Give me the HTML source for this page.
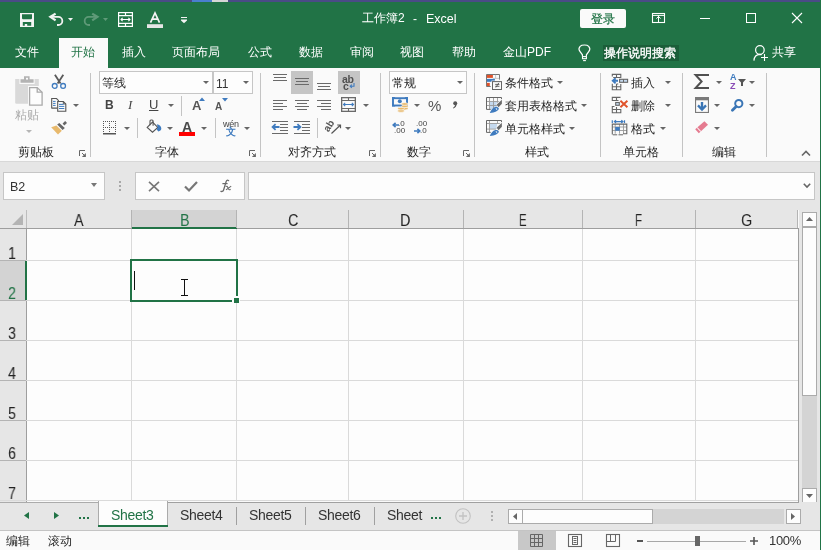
<!DOCTYPE html>
<html><head><meta charset="utf-8">
<style>
*{margin:0;padding:0;box-sizing:border-box}
html,body{width:821px;height:550px;overflow:hidden;background:#fafafa;font-family:"Liberation Sans",sans-serif;font-size:12px;color:#262626}
.a{position:absolute}
.t{position:absolute;white-space:nowrap;line-height:1;will-change:transform}
svg{position:absolute;overflow:visible}
.dd{position:absolute;width:0;height:0;border-left:3px solid transparent;border-right:3px solid transparent;border-top:3.5px solid #666}
.sep{position:absolute;width:1px;background:#c4c4c4}
.hl{position:absolute;background:#c5c5c5}
</style></head><body>

<!-- top strip -->
<div class="a" style="left:0;top:0;width:821px;height:2px;background:#4a4b86"></div>
<div class="a" style="left:192px;top:0;width:20px;height:2px;background:#4a7fcf"></div>
<div class="a" style="left:212px;top:0;width:16px;height:2px;background:#d6d6d6"></div>

<!-- title bar + tabs -->
<div class="a" style="left:0;top:2px;width:821px;height:66px;background:#217346"></div>

<!-- QAT icons -->
<svg style="left:20px;top:13px" width="14" height="14" viewBox="0 0 14 14">
  <rect x="0" y="0" width="14" height="14" fill="#f4f4f4"/>
  <path d="M2 1.3H12V5.4L11.2 6.3H2.8L2 5.4Z" fill="#217346"/>
  <path d="M2.8 9H11.2V12.7H7.2V11H4.8V12.7H2.8Z" fill="#217346"/>
</svg>
<svg style="left:46px;top:10px" width="20" height="20" viewBox="0 0 20 20">
  <path d="M9.6 3.6L4.4 6.9L9.6 10.4" fill="none" stroke="#f2f2f2" stroke-width="2.3" stroke-linejoin="miter"/>
  <path d="M5.3 6.9H12.3A4.05 4.05 0 0 1 12.3 15H11" fill="none" stroke="#f2f2f2" stroke-width="1.8"/>
</svg>
<svg style="left:68px;top:18px" width="5" height="3" viewBox="0 0 5 3"><path d="M0 0H5L2.5 3Z" fill="#f2f2f2"/></svg>
<svg style="left:81px;top:10px" width="20" height="20" viewBox="0 0 20 20">
  <path d="M11.2 3.6L16.4 6.9L11.2 10.4" fill="none" stroke="#5f9a78" stroke-width="2.3"/>
  <path d="M15.5 6.9H7.7A4.05 4.05 0 0 0 7.7 15H9" fill="none" stroke="#5f9a78" stroke-width="1.8"/>
</svg>
<svg style="left:103px;top:18px" width="5" height="3" viewBox="0 0 5 3"><path d="M0 0H5L2.5 3Z" fill="#5f9a78"/></svg>
<svg style="left:118px;top:12px" width="15" height="15" viewBox="0 0 15 15">
  <rect x="0.6" y="0.6" width="13.8" height="13.8" fill="none" stroke="#fff" stroke-width="1.2"/>
  <path d="M0.6 3.6H14.4M0.6 11.4H14.4M7.5 0.6V3.6M7.5 11.4V14.4" stroke="#fff" stroke-width="1.2"/>
  <path d="M3 7.5H12M4.6 5.9L3 7.5L4.6 9.1M10.4 5.9L12 7.5L10.4 9.1" fill="none" stroke="#fff" stroke-width="1.1"/>
</svg>
<svg style="left:147px;top:12px" width="16" height="16" viewBox="0 0 16 16">
  <path d="M3.5 10.6L8 0.9L12.5 10.6M5.2 7.2H10.8" fill="none" stroke="#f4f4f4" stroke-width="1.7"/>
  <rect x="0" y="12.2" width="16" height="3.8" fill="#e6e6e6"/>
</svg>
<svg style="left:181px;top:17px" width="6" height="7" viewBox="0 0 6 7">
  <path d="M0 0.5H6" stroke="#f4f4f4" stroke-width="1"/>
  <path d="M0 2.6H6V3.4L3 6.2L0 3.4Z" fill="#f4f4f4"/>
</svg>

<!-- title -->
<div class="t" style="left:362px;top:12px;color:#fff;font-size:12px">工作簿2</div>
<div class="t" style="left:413px;top:13px;color:#fff;font-size:12px">-</div>
<div class="t" style="left:426px;top:13px;color:#fff;font-size:12.5px">Excel</div>

<!-- login -->
<div class="a" style="left:580px;top:9px;width:46px;height:19px;background:#fafafa;border-radius:2px"></div>
<div class="t" style="left:591px;top:13px;color:#217346;font-size:12px;-webkit-text-stroke:0.2px #217346">登录</div>

<!-- ribbon display options -->
<svg style="left:652px;top:13px" width="13" height="10" viewBox="0 0 13 10">
  <rect x="0.5" y="0.5" width="12" height="9" fill="none" stroke="#fff" stroke-width="1.1"/>
  <path d="M0.5 2.4H12.5M6.5 2.4V9.5" stroke="#fff" stroke-width="1"/>
  <path d="M4.4 5.6L6.5 3.4L8.6 5.6" fill="none" stroke="#fff" stroke-width="1"/>
</svg>
<!-- window controls -->
<div class="a" style="left:700px;top:18px;width:10px;height:1px;background:#fff"></div>
<div class="a" style="left:746px;top:13px;width:10px;height:10px;border:1px solid #fff"></div>
<svg style="left:791px;top:12px" width="12" height="12" viewBox="0 0 12 12">
  <path d="M1 1L11 11M11 1L1 11" stroke="#fff" stroke-width="1.1"/>
</svg>

<!-- tabs -->
<div class="t" style="left:15px;top:46px;color:#fff">文件</div>
<div class="t" style="left:122px;top:46px;color:#fff">插入</div>
<div class="t" style="left:172px;top:46px;color:#fff">页面布局</div>
<div class="t" style="left:248px;top:46px;color:#fff">公式</div>
<div class="t" style="left:299px;top:46px;color:#fff">数据</div>
<div class="t" style="left:350px;top:46px;color:#fff">审阅</div>
<div class="t" style="left:400px;top:46px;color:#fff">视图</div>
<div class="t" style="left:452px;top:46px;color:#fff">帮助</div>
<div class="t" style="left:503px;top:46px;color:#fff">金山PDF</div>
<svg style="left:572px;top:42px" width="24" height="22" viewBox="0 0 24 22">
  <path d="M10.4 14.2V12.8L7.9 9.4C6.9 8 6.9 5.6 8.1 4.3C9 3.4 10.5 3 12.4 3C14.3 3 15.8 3.4 16.7 4.3C17.9 5.6 17.9 8 16.9 9.4L14.4 12.8V14.2" fill="none" stroke="#fff" stroke-width="1.2"/>
  <rect x="10.5" y="14.6" width="3.9" height="2.1" fill="none" stroke="#fff" stroke-width="1.1"/>
  <path d="M11.1 18.6H13.9" stroke="#fff" stroke-width="1.1"/>
</svg>
<div class="a" style="left:603px;top:45px;width:76px;height:16px;background:#1b5e39"></div>
<div class="t" style="left:604px;top:47px;color:#fff;-webkit-text-stroke:0.35px #fff">操作说明搜索</div>
<svg style="left:753px;top:44px" width="16" height="18" viewBox="0 0 16 18">
  <circle cx="6.9" cy="6" r="4.3" fill="none" stroke="#fff" stroke-width="1.2"/>
  <path d="M0.9 16.6C1.2 13 3.6 10.5 6.9 10.4C7.6 10.4 8.2 10.5 8.8 10.7" fill="none" stroke="#fff" stroke-width="1.2"/>
  <path d="M11.5 10V17M8 13.5H15" stroke="#fff" stroke-width="1.1"/>
</svg>
<div class="t" style="left:772px;top:46px;color:#fff">共享</div>

<!-- active tab -->
<div class="a" style="left:59px;top:38px;width:49px;height:30px;background:#fafafa"></div>
<div class="t" style="left:71px;top:46px;color:#217346">开始</div>

<!-- ribbon -->
<div class="a" style="left:0;top:68px;width:820px;height:93px;background:#fafafa"></div>
<div class="a" style="left:0;top:161px;width:820px;height:1px;background:#d8d8d8"></div>

<!-- separators -->
<div class="sep" style="left:90px;top:73px;height:84px"></div>
<div class="sep" style="left:260px;top:73px;height:84px"></div>
<div class="sep" style="left:380px;top:73px;height:84px"></div>
<div class="sep" style="left:474px;top:73px;height:84px"></div>
<div class="sep" style="left:600px;top:73px;height:84px"></div>
<div class="sep" style="left:682px;top:73px;height:84px"></div>
<div class="sep" style="left:766px;top:73px;height:84px"></div>

<!-- group labels -->
<div class="t" style="left:18px;top:146px">剪贴板</div>
<div class="t" style="left:155px;top:146px">字体</div>
<div class="t" style="left:288px;top:146px">对齐方式</div>
<div class="t" style="left:407px;top:146px">数字</div>
<div class="t" style="left:525px;top:146px">样式</div>
<div class="t" style="left:623px;top:146px">单元格</div>
<div class="t" style="left:712px;top:146px">编辑</div>

<!-- launchers -->
<svg style="left:79px;top:150px" width="7" height="7" viewBox="0 0 7 7"><path d="M0.5 6V0.5H6" fill="none" stroke="#666" stroke-width="1"/><path d="M2.9 6.9H6.9V2.9Z" fill="#666"/><path d="M3 3L5 5" stroke="#666" stroke-width="1"/></svg>
<svg style="left:249px;top:150px" width="7" height="7" viewBox="0 0 7 7"><path d="M0.5 6V0.5H6" fill="none" stroke="#666" stroke-width="1"/><path d="M2.9 6.9H6.9V2.9Z" fill="#666"/><path d="M3 3L5 5" stroke="#666" stroke-width="1"/></svg>
<svg style="left:369px;top:150px" width="7" height="7" viewBox="0 0 7 7"><path d="M0.5 6V0.5H6" fill="none" stroke="#666" stroke-width="1"/><path d="M2.9 6.9H6.9V2.9Z" fill="#666"/><path d="M3 3L5 5" stroke="#666" stroke-width="1"/></svg>
<svg style="left:463px;top:150px" width="7" height="7" viewBox="0 0 7 7"><path d="M0.5 6V0.5H6" fill="none" stroke="#666" stroke-width="1"/><path d="M2.9 6.9H6.9V2.9Z" fill="#666"/><path d="M3 3L5 5" stroke="#666" stroke-width="1"/></svg>
<svg style="left:801px;top:150px" width="10" height="6" viewBox="0 0 10 6"><path d="M1 5.5L5 1.5L9 5.5" fill="none" stroke="#666" stroke-width="1.6"/></svg>

<!-- clipboard -->
<svg style="left:10px;top:72px" width="36" height="36" viewBox="0 0 36 36">
  <path d="M5.2 6.9H28.8V30.5Q28.8 31.7 27.6 31.7H6.4Q5.2 31.7 5.2 30.5Z" fill="#d9d9d9"/>
  <rect x="9.4" y="5.8" width="15.2" height="6.2" fill="#fafafa"/>
  <path d="M10.5 7.2H14V4.3H19.6V7.2H23.6V10.7H10.5Z" fill="#b3b3b3"/>
  <rect x="16" y="5.8" width="2" height="1.8" fill="#fafafa"/>
  <rect x="18" y="14" width="16" height="21" fill="#fafafa"/>
  <path d="M19.6 15.6H27.2L32.1 20.2V33.1H19.6Z" fill="#fdfdfd" stroke="#a9a9a9" stroke-width="1.3"/>
  <path d="M27.2 15.6V20.2H32.1" fill="none" stroke="#a9a9a9" stroke-width="1.3"/>
</svg>
<div class="t" style="left:15px;top:109px;color:#ababab">粘贴</div>
<div class="dd" style="left:26px;top:130px;border-top-color:#b5b5b5"></div>
<svg style="left:48px;top:72px" width="20" height="20" viewBox="0 0 20 20">
  <path d="M6.9 2.7L12.6 11.6M15.3 2.7L9.6 11.6" stroke="#5a5a5a" stroke-width="1.8"/>
  <circle cx="6.7" cy="13.9" r="2.4" fill="#fafafa" stroke="#3f7bbf" stroke-width="1.3"/>
  <circle cx="15.1" cy="13.9" r="2.4" fill="#fafafa" stroke="#3f7bbf" stroke-width="1.3"/>
</svg>
<svg style="left:48px;top:96px" width="20" height="18" viewBox="0 0 20 18">
  <path d="M3.7 12.6V2.5H8.5L10.4 4.4V5.5M3.7 12.1H9.2" fill="none" stroke="#555" stroke-width="1.1"/>
  <path d="M5 5.4H7.6M5 7.4H7.6M5 9.4H7.6" stroke="#3f7bbf" stroke-width="1"/>
  <path d="M9.7 5.5H15.3L17.8 8V15.2H9.7Z" fill="#fafafa" stroke="#555" stroke-width="1.1"/>
  <path d="M15.3 5.5V8H17.8" fill="none" stroke="#555" stroke-width="0.9"/>
  <path d="M11 8.4H15.6M11 10.4H16.3M11 12.5H16.3" stroke="#3f7bbf" stroke-width="1"/>
</svg>
<div class="dd" style="left:73px;top:104px"></div>
<svg style="left:48px;top:116px" width="24" height="22" viewBox="0 0 24 22">
  <path d="M14.6 7.6L17.2 5L19 7L16.3 9.6Z" fill="#666"/>
  <path d="M9.2 8.5L11.3 7L16.8 12L14.6 13.9Z" fill="#666"/>
  <path d="M3.2 11.2L8.4 9.4L13.8 14.8L10 18.6Z" fill="#e8b96c"/>
</svg>

<!-- font -->
<div class="a" style="left:99px;top:71px;width:114px;height:23px;border:1px solid #c6c6c6;background:#fdfdfd"></div>
<div class="a" style="left:213px;top:71px;width:40px;height:23px;border:1px solid #c6c6c6;background:#fdfdfd"></div>
<div class="t" style="left:102px;top:77px">等线</div>
<div class="dd" style="left:203px;top:81px"></div>
<div class="t" style="left:216px;top:78px;font-size:12px;color:#333">11</div>
<div class="dd" style="left:243px;top:81px"></div>
<div class="t" style="left:105px;top:99px;font-weight:bold;font-size:12px;color:#444">B</div>
<div class="t" style="left:128px;top:98px;font-style:italic;font-size:13px;color:#444;font-family:'Liberation Serif',serif">I</div>
<div class="t" style="left:149px;top:98px;font-size:13px;color:#444;text-decoration:underline">U</div>
<div class="dd" style="left:168px;top:104px"></div>
<div class="sep" style="left:181px;top:96px;height:20px"></div>
<div class="t" style="left:192px;top:99px;font-size:13px;color:#555;font-weight:bold">A</div>
<svg style="left:199px;top:97px" width="6" height="4" viewBox="0 0 6 4"><path d="M0 4L3 0.5L6 4Z" fill="#3f7bbf"/></svg>
<div class="t" style="left:215px;top:102px;font-size:10px;color:#555;font-weight:bold">A</div>
<svg style="left:222px;top:98px" width="6" height="4" viewBox="0 0 6 4"><path d="M0 0L3 3.5L6 0Z" fill="#3f7bbf"/></svg>
<svg style="left:103px;top:121px" width="14" height="14" viewBox="0 0 14 14">
  <path d="M0 0h1v1h-1zM0 2h1v1h-1zM0 4h1v1h-1zM0 6h1v1h-1zM0 8h1v1h-1zM0 10h1v1h-1zM6 0h1v1h-1zM6 2h1v1h-1zM6 4h1v1h-1zM6 6h1v1h-1zM6 8h1v1h-1zM6 10h1v1h-1zM12 0h1v1h-1zM12 2h1v1h-1zM12 4h1v1h-1zM12 6h1v1h-1zM12 8h1v1h-1zM12 10h1v1h-1zM2 0h1v1h-1zM4 0h1v1h-1zM8 0h1v1h-1zM10 0h1v1h-1zM2 6h1v1h-1zM4 6h1v1h-1zM8 6h1v1h-1zM10 6h1v1h-1z" fill="#555"/>
  <rect x="0" y="12" width="13" height="1.5" fill="#555"/>
</svg>
<div class="dd" style="left:124px;top:127px"></div>
<div class="sep" style="left:137px;top:118px;height:20px"></div>
<svg style="left:146px;top:119px" width="16" height="15" viewBox="0 0 16 15">
  <path d="M1.2 8.4L6.5 3.1L11.8 8.4L6.5 13.2Z" fill="none" stroke="#555" stroke-width="1.1"/>
  <path d="M4 6.2V2Q4 1 5 1H6Q7.1 1 7.1 2V6.8" fill="none" stroke="#555" stroke-width="1.1"/>
  <path d="M10.8 5.2C13.5 5.5 15.5 7.5 15.3 9.8C15.2 11.3 14 12.3 12.3 12.4L10.6 10.2L11.8 8.4Z" fill="#3f7bbf"/>
</svg>
<div class="dd" style="left:167px;top:127px"></div>
<div class="t" style="left:182px;top:120px;font-size:14px;color:#4a4a4a;font-weight:bold">A</div>
<div class="a" style="left:179px;top:132px;width:16px;height:4px;background:#f00"></div>
<div class="dd" style="left:201px;top:127px"></div>
<div class="sep" style="left:215px;top:118px;height:20px"></div>
<div class="t" style="left:223px;top:120px;font-size:9px;color:#444;letter-spacing:-0.2px">wén</div>
<div class="t" style="left:226px;top:127px;font-size:10px;color:#3f7bbf;font-weight:bold">文</div>
<div class="dd" style="left:244px;top:127px"></div>

<!-- alignment -->
<div class="hl" style="left:291px;top:71px;width:22px;height:23px"></div>
<div class="hl" style="left:338px;top:71px;width:22px;height:23px"></div>
<div class="a" style="left:273px;top:74px;width:14px;height:1px;background:#6a6a6a"></div>
<div class="a" style="left:274px;top:77px;width:12px;height:1px;background:#6a6a6a"></div>
<div class="a" style="left:273px;top:80px;width:14px;height:1px;background:#6a6a6a"></div>
<div class="a" style="left:295px;top:78px;width:14px;height:1px;background:#6a6a6a"></div>
<div class="a" style="left:296px;top:81px;width:12px;height:1px;background:#6a6a6a"></div>
<div class="a" style="left:295px;top:84px;width:14px;height:1px;background:#6a6a6a"></div>
<div class="a" style="left:317px;top:83px;width:14px;height:1px;background:#6a6a6a"></div>
<div class="a" style="left:318px;top:86px;width:12px;height:1px;background:#6a6a6a"></div>
<div class="a" style="left:317px;top:89px;width:14px;height:1px;background:#6a6a6a"></div>
<div class="a" style="left:273px;top:100px;width:14px;height:1px;background:#6a6a6a"></div>
<div class="a" style="left:273px;top:103px;width:10px;height:1px;background:#6a6a6a"></div>
<div class="a" style="left:273px;top:106px;width:14px;height:1px;background:#6a6a6a"></div>
<div class="a" style="left:273px;top:109px;width:10px;height:1px;background:#6a6a6a"></div>
<div class="a" style="left:295px;top:100px;width:14px;height:1px;background:#6a6a6a"></div>
<div class="a" style="left:297px;top:103px;width:10px;height:1px;background:#6a6a6a"></div>
<div class="a" style="left:295px;top:106px;width:14px;height:1px;background:#6a6a6a"></div>
<div class="a" style="left:297px;top:109px;width:10px;height:1px;background:#6a6a6a"></div>
<div class="a" style="left:317px;top:100px;width:14px;height:1px;background:#6a6a6a"></div>
<div class="a" style="left:321px;top:103px;width:10px;height:1px;background:#6a6a6a"></div>
<div class="a" style="left:317px;top:106px;width:14px;height:1px;background:#6a6a6a"></div>
<div class="a" style="left:321px;top:109px;width:10px;height:1px;background:#6a6a6a"></div>
<div class="t" style="left:342px;top:74px;font-size:10.5px;font-weight:bold;color:#505050;letter-spacing:-0.3px">ab</div>
<div class="t" style="left:343px;top:81px;font-size:10.5px;font-weight:bold;color:#505050">c</div>
<svg style="left:349px;top:83px" width="6" height="5" viewBox="0 0 6 5"><path d="M5 0V3.2H1.2M2.8 1.6L1.2 3.2L2.8 4.8" fill="none" stroke="#3f7bbf" stroke-width="1.1"/></svg>
<svg style="left:341px;top:97px" width="15" height="15" viewBox="0 0 15 15">
  <rect x="0.65" y="0.65" width="13.7" height="13.7" fill="none" stroke="#6a6a6a" stroke-width="1.3"/>
  <path d="M0.5 3.5H14.5M0.5 11.5H14.5M7.5 0.5V3.5M7.5 11.5V14.5" stroke="#6a6a6a" stroke-width="1.1"/>
  <path d="M2.5 7.5H12.5M4.2 5.8L2.5 7.5L4.2 9.2M10.8 5.8L12.5 7.5L10.8 9.2" fill="none" stroke="#3f7bbf" stroke-width="1.1"/>
</svg>
<div class="dd" style="left:363px;top:104px"></div>
<div class="a" style="left:272px;top:121px;width:16px;height:1px;background:#6a6a6a"></div>
<div class="a" style="left:280px;top:124px;width:8px;height:1px;background:#6a6a6a"></div>
<div class="a" style="left:280px;top:127px;width:8px;height:1px;background:#6a6a6a"></div>
<div class="a" style="left:280px;top:130px;width:8px;height:1px;background:#6a6a6a"></div>
<div class="a" style="left:272px;top:133px;width:16px;height:1px;background:#6a6a6a"></div>
<svg style="left:271px;top:123px" width="9" height="8" viewBox="0 0 9 8"><path d="M8.5 4H2M4.6 1.2L1.6 4L4.6 6.8" fill="none" stroke="#3f7bbf" stroke-width="1.8"/></svg>
<div class="a" style="left:294px;top:121px;width:16px;height:1px;background:#6a6a6a"></div>
<div class="a" style="left:302px;top:124px;width:8px;height:1px;background:#6a6a6a"></div>
<div class="a" style="left:302px;top:127px;width:8px;height:1px;background:#6a6a6a"></div>
<div class="a" style="left:302px;top:130px;width:8px;height:1px;background:#6a6a6a"></div>
<div class="a" style="left:294px;top:133px;width:16px;height:1px;background:#6a6a6a"></div>
<svg style="left:293px;top:123px" width="9" height="8" viewBox="0 0 9 8"><path d="M0.5 4H7M4.4 1.2L7.4 4L4.4 6.8" fill="none" stroke="#3f7bbf" stroke-width="1.8"/></svg>
<div class="sep" style="left:317px;top:118px;height:20px"></div>
<svg style="left:323px;top:118px" width="20" height="18" viewBox="0 0 20 18">
  <text x="0" y="0" font-size="10" font-weight="bold" fill="#555" font-family="Liberation Sans" transform="translate(5.5 14.5) rotate(-58)">ab</text>
  <path d="M8.5 15.5L17.2 7.2M14.2 7H17.5V10.3" fill="none" stroke="#555" stroke-width="1.2"/>
</svg>
<div class="dd" style="left:345px;top:127px"></div>

<!-- number -->
<div class="a" style="left:389px;top:71px;width:78px;height:23px;border:1px solid #c6c6c6;background:#fdfdfd"></div>
<div class="t" style="left:392px;top:77px">常规</div>
<div class="dd" style="left:457px;top:81px"></div>
<svg style="left:392px;top:97px" width="17" height="16" viewBox="0 0 17 16">
  <rect x="1" y="1.2" width="14" height="7.3" fill="none" stroke="#3f7bbf" stroke-width="1.9"/>
  <path d="M0 0H3.5L0 3.2ZM16 0H12.5L16 3.2ZM0 9.5H3.5L0 6.3Z" fill="#3f7bbf"/>
  <circle cx="7.8" cy="4.3" r="2" fill="#3f7bbf"/>
  <g fill="#e8b96c" stroke="#fafafa" stroke-width="0.6">
  <ellipse cx="12.8" cy="11.6" rx="3.3" ry="1.3"/>
  <ellipse cx="12.8" cy="9.3" rx="3.3" ry="1.3"/>
  <ellipse cx="12.8" cy="7" rx="3.3" ry="1.3"/>
  <ellipse cx="9" cy="13.9" rx="3.3" ry="1.3"/>
  <ellipse cx="9" cy="11.6" rx="3.3" ry="1.3"/>
  </g>
</svg>
<div class="dd" style="left:414px;top:104px"></div>
<div class="t" style="left:428px;top:98px;font-size:15px;color:#555">%</div>
<svg style="left:452px;top:101px" width="6" height="8" viewBox="0 0 6 8"><circle cx="3.2" cy="2.2" r="2" fill="#555"/><path d="M4.6 2.5C4.8 5 3.5 6.8 1.2 7.6L0.9 6.8C2.4 6 3.1 4.8 3.2 3.2Z" fill="#555"/></svg>
<div class="t" style="left:398px;top:120px;font-size:8px;color:#444">.0</div>
<div class="t" style="left:394px;top:127px;font-size:8px;color:#444">.00</div>
<svg style="left:392px;top:122px" width="7" height="6" viewBox="0 0 7 6"><path d="M7 3H1.5M3.6 0.8L1.2 3L3.6 5.2" fill="none" stroke="#3f7bbf" stroke-width="1.6"/></svg>
<div class="t" style="left:416px;top:120px;font-size:8px;color:#444">.00</div>
<div class="t" style="left:420px;top:127px;font-size:8px;color:#444">.0</div>
<svg style="left:414px;top:128px" width="7" height="6" viewBox="0 0 7 6"><path d="M0 3H5.5M3.4 0.8L5.8 3L3.4 5.2" fill="none" stroke="#3f7bbf" stroke-width="1.6"/></svg>

<!-- styles -->
<svg style="left:484px;top:72px" width="20" height="20" viewBox="0 0 20 20">
  <path d="M6.7 14.5H2.5V2.5H15.5V7.6" fill="none" stroke="#666" stroke-width="0.9"/>
  <path d="M8.9 6.4H15.3M11.6 2.8V6.4" stroke="#bbb" stroke-width="0.8"/>
  <rect x="2.9" y="3" width="6" height="2.9" fill="#e0522a"/>
  <rect x="2.9" y="6.9" width="8" height="2.9" fill="#3f7bbf"/>
  <rect x="2.9" y="10.9" width="2.9" height="3.1" fill="#e0522a"/>
  <rect x="7.5" y="8.6" width="10.8" height="9.7" fill="#fafafa"/>
  <rect x="8.5" y="9.6" width="9" height="7.9" fill="#fafafa" stroke="#666" stroke-width="1"/>
  <path d="M11.2 12.4H15.4M11.2 14.3H15.4M14.8 10.9L11.8 15.5" fill="none" stroke="#555" stroke-width="0.9"/>
</svg>
<div class="t" style="left:505px;top:77px">条件格式</div>
<div class="dd" style="left:557px;top:81px"></div>
<svg style="left:484px;top:95px" width="20" height="20" viewBox="0 0 20 20">
  <rect x="5.8" y="6.9" width="7.2" height="7.6" fill="#c5d9ee"/>
  <path d="M5.5 3V14.4M9.5 3V14.4M13.5 3V11M2.5 6.5H17M2.5 10.5H13" stroke="#9a9a9a" stroke-width="0.9"/>
  <path d="M6.7 14.4H2.5V2.5H17.5V4.5" fill="none" stroke="#666" stroke-width="1"/>
  <path d="M11.8 9.2L18.5 3.2V10.5L15.5 13.2Z" fill="#fafafa"/>
  <path d="M12.6 9.8L17.9 4.8V8.8L14.6 12.3Z" fill="#6a6a6a"/>
  <path d="M5.8 17.9C6.8 15.2 8.8 12.6 11.3 12C13 11.6 14.6 12.3 14.9 13.7C14.2 15.6 11.2 17.5 5.8 17.9Z" fill="#3f7bbf"/>
  <path d="M11.5 13.3C12.4 13.2 13.1 13.6 13.3 14.3L12.6 15Z" fill="#fafafa"/>
</svg>
<div class="t" style="left:505px;top:100px">套用表格格式</div>
<div class="dd" style="left:581px;top:104px"></div>
<svg style="left:484px;top:118px" width="20" height="20" viewBox="0 0 20 20">
  <rect x="5.8" y="5.8" width="7.2" height="5.1" fill="#c5d9ee"/>
  <path d="M5.5 3V14.4M13.5 3V5.5M2.5 5.5H16M2.5 11.1H12" stroke="#9a9a9a" stroke-width="0.9"/>
  <path d="M6.7 14.4H2.5V2.5H17.5V4.5" fill="none" stroke="#666" stroke-width="1"/>
  <path d="M11.8 9.2L18.5 3.2V10.5L15.5 13.2Z" fill="#fafafa"/>
  <path d="M12.6 9.8L17.9 4.8V8.8L14.6 12.3Z" fill="#6a6a6a"/>
  <path d="M5.8 17.9C6.8 15.2 8.8 12.6 11.3 12C13 11.6 14.6 12.3 14.9 13.7C14.2 15.6 11.2 17.5 5.8 17.9Z" fill="#3f7bbf"/>
  <path d="M11.5 13.3C12.4 13.2 13.1 13.6 13.3 14.3L12.6 15Z" fill="#fafafa"/>
</svg>
<div class="t" style="left:505px;top:123px">单元格样式</div>
<div class="dd" style="left:569px;top:127px"></div>

<!-- cells -->
<svg style="left:609px;top:72px" width="22" height="20" viewBox="0 0 22 20">
  <path d="M4.2 5.5H11.8V2.4H3.3V4.5M7.5 2.4V5.5" fill="none" stroke="#666" stroke-width="1.1"/>
  <path d="M3.3 11.8V17.8H11.8V12M3.3 14.7H11.8M7.5 12V17.8M7.5 12H9.2" fill="none" stroke="#666" stroke-width="1.1"/>
  <rect x="10.6" y="7.3" width="8" height="3" fill="#c5d9ee" stroke="#666" stroke-width="1.1"/>
  <path d="M14.5 7.3V10.3" stroke="#666" stroke-width="1"/>
  <path d="M9 8.8H4M6.6 6.2L3.8 8.8L6.6 11.4" fill="none" stroke="#3f7bbf" stroke-width="1.9"/>
</svg>
<div class="t" style="left:631px;top:77px">插入</div>
<div class="dd" style="left:665px;top:81px"></div>
<svg style="left:609px;top:95px" width="22" height="20" viewBox="0 0 22 20">
  <path d="M11.5 2.4H3.3V5.5H9.5M7.5 2.4V5.5" fill="none" stroke="#666" stroke-width="1.1"/>
  <rect x="6.7" y="7.5" width="3.6" height="2.8" fill="#c5d9ee" stroke="#666" stroke-width="1.1"/>
  <path d="M5.5 11.5H3.3V17.8H11.8V14.5H3.3M7.5 12V17.8" fill="none" stroke="#666" stroke-width="1.1"/>
  <path d="M11.4 5.8L18.4 12.2M18.4 5.8L11.4 12.2" stroke="#e0522a" stroke-width="1.9"/>
</svg>
<div class="t" style="left:631px;top:100px">删除</div>
<div class="dd" style="left:665px;top:104px"></div>
<svg style="left:609px;top:117px" width="22" height="20" viewBox="0 0 22 20">
  <path d="M3.3 3.2V6M15.5 3.2V6M5.5 4.6H13.8M7 3.2L5.4 4.6L7 6M12.3 3.2L13.9 4.6L12.3 6" fill="none" stroke="#3f7bbf" stroke-width="1.2"/>
  <path d="M6.2 7.1V16.7M10.5 7.1V16.7M14.5 7.1V16.7M3.3 10H17.8M3.3 13.5H17.8" stroke="#999" stroke-width="0.9"/>
  <rect x="6.2" y="10" width="4.6" height="3.7" fill="#3f7bbf"/>
  <path d="M3.3 17.5V7.1H17.8V16.7H14" fill="none" stroke="#666" stroke-width="1.1"/>
  <path d="M3.8 17.8H8.2M9.5 17.8H14" stroke="#666" stroke-width="1"/>
</svg>
<div class="t" style="left:631px;top:123px">格式</div>
<div class="dd" style="left:660px;top:127px"></div>

<!-- editing -->
<svg style="left:694px;top:74px" width="15" height="15" viewBox="0 0 15 15">
  <path d="M15 1H1.6L7.6 7.5L1.6 14H15" fill="none" stroke="#505050" stroke-width="2" stroke-linejoin="miter"/>
</svg>
<div class="dd" style="left:716px;top:81px"></div>
<div class="t" style="left:730px;top:73px;font-size:9px;color:#3f7bbf;font-weight:bold">A</div>
<div class="t" style="left:730px;top:82px;font-size:9px;color:#8a4bb5;font-weight:bold">Z</div>
<svg style="left:738px;top:79px" width="8" height="7" viewBox="0 0 8 7"><path d="M0 0H8L5 3.5V7H3V3.5Z" fill="#555"/></svg>
<div class="dd" style="left:749px;top:81px"></div>
<svg style="left:695px;top:97px" width="14" height="16" viewBox="0 0 14 16">
  <rect x="0.55" y="0.55" width="12.9" height="14.9" fill="#fafafa" stroke="#7a7a7a" stroke-width="1.1"/>
  <rect x="0" y="0" width="14" height="3.3" fill="#7a7a7a"/>
  <path d="M7 5V12" stroke="#3a75b5" stroke-width="2.4"/>
  <path d="M3 8.4L7 12.6L11 8.4" fill="none" stroke="#3a75b5" stroke-width="2.3"/>
</svg>
<div class="dd" style="left:714px;top:104px"></div>
<svg style="left:729px;top:98px" width="16" height="14" viewBox="0 0 16 14">
  <circle cx="9.8" cy="5.6" r="3.6" fill="none" stroke="#3a75b5" stroke-width="2"/>
  <path d="M3.4 12.2L7.2 8.4" stroke="#3a75b5" stroke-width="2.8" stroke-linecap="round"/>
</svg>
<div class="dd" style="left:749px;top:104px"></div>
<svg style="left:694px;top:119px" width="16" height="16" viewBox="0 0 16 16">
  <path d="M1.2 10.2L10.4 2.2L14 5.8L4.8 14.2Z" fill="#e57b90"/>
  <path d="M3.1 8.5L6.8 12.5" stroke="#fafafa" stroke-width="1.1"/>
</svg>
<div class="dd" style="left:714px;top:127px"></div>

<!-- formula bar area -->
<div class="a" style="left:0;top:162px;width:820px;height:48px;background:#e6e6e6"></div>

<!-- name box -->
<div class="a" style="left:3px;top:172px;width:102px;height:28px;border:1px solid #c6c6c6;background:#fdfdfd"></div>
<div class="t" style="left:10px;top:181px;font-size:12.5px;color:#333">B2</div>
<div class="dd" style="left:91px;top:183px;border-left-width:3.5px;border-right-width:3.5px;border-top-width:4px;border-top-color:#777"></div>
<div class="a" style="left:119px;top:181px;width:2px;height:2px;background:#a8a8a8"></div>
<div class="a" style="left:119px;top:185px;width:2px;height:2px;background:#a8a8a8"></div>
<div class="a" style="left:119px;top:189px;width:2px;height:2px;background:#a8a8a8"></div>
<div class="a" style="left:135px;top:172px;width:110px;height:28px;border:1px solid #c6c6c6;background:#fdfdfd"></div>
<svg style="left:148px;top:181px" width="12" height="11" viewBox="0 0 12 11"><path d="M1 0.8L11 10.2M11 0.8L1 10.2" stroke="#777" stroke-width="1.6"/></svg>
<svg style="left:184px;top:181px" width="14" height="11" viewBox="0 0 14 11"><path d="M1 5.5L5 9.5L13 1" fill="none" stroke="#777" stroke-width="2.2"/></svg>
<svg style="left:219px;top:179px" width="14" height="14" viewBox="0 0 14 14">
  <path d="M9.8 2.2C9.5 0.9 7.8 0.6 7.2 2.4L4.6 11C4.1 12.6 2.4 13 1.6 11.9" fill="none" stroke="#6a6a6a" stroke-width="1.3"/>
  <path d="M3.4 4.6H8.6" stroke="#6a6a6a" stroke-width="1.2"/>
  <path d="M6.6 7.6C7.6 6.9 8.2 7.1 8.6 8L9.6 10.1C10 11 10.7 11 11.6 10.3M12.2 7.1L7 10.9" fill="none" stroke="#6a6a6a" stroke-width="1.1"/>
</svg>
<div class="a" style="left:248px;top:172px;width:567px;height:28px;border:1px solid #c6c6c6;background:#fdfdfd"></div>
<svg style="left:803px;top:183px" width="8" height="5" viewBox="0 0 8 5"><path d="M0.8 0.8L4 4L7.2 0.8" fill="none" stroke="#666" stroke-width="1.6"/></svg>

<!-- column headers -->
<div class="a" style="left:0;top:210px;width:798px;height:18px;background:#e6e6e6"></div>
<svg style="left:12px;top:214px" width="11" height="11" viewBox="0 0 11 11"><path d="M11 0V11H0Z" fill="#b4b4b4"/></svg>
<div class="a" style="left:131px;top:210px;width:106px;height:18px;background:#d3d3d3"></div>
<div class="a" style="left:0;top:228px;width:798px;height:1px;background:#9e9e9e"></div>
<div class="a" style="left:132px;top:227px;width:105px;height:2px;background:#217346"></div>
<div class="a" style="left:26px;top:210px;width:1px;height:18px;background:#bdbdbd"></div>
<div class="a" style="left:131px;top:210px;width:1px;height:18px;background:#b4b4b4"></div>
<div class="a" style="left:236px;top:210px;width:1px;height:18px;background:#b4b4b4"></div>
<div class="a" style="left:348px;top:210px;width:1px;height:18px;background:#b4b4b4"></div>
<div class="a" style="left:463px;top:210px;width:1px;height:18px;background:#b4b4b4"></div>
<div class="a" style="left:582px;top:210px;width:1px;height:18px;background:#b4b4b4"></div>
<div class="a" style="left:695px;top:210px;width:1px;height:18px;background:#b4b4b4"></div>
<div class="a" style="left:797px;top:210px;width:1px;height:18px;background:#b4b4b4"></div>
<div class="t" style="left:74px;top:213px;font-size:16px;color:#222;transform:scaleX(0.9);transform-origin:left top">A</div>
<div class="t" style="left:180px;top:213px;font-size:16px;color:#217346;transform:scaleX(0.9);transform-origin:left top">B</div>
<div class="t" style="left:288px;top:213px;font-size:16px;color:#222;transform:scaleX(0.9);transform-origin:left top">C</div>
<div class="t" style="left:400px;top:213px;font-size:16px;color:#222;transform:scaleX(0.9);transform-origin:left top">D</div>
<div class="t" style="left:519px;top:213px;font-size:16px;color:#222;transform:scaleX(0.72);transform-origin:left top">E</div>
<div class="t" style="left:635px;top:213px;font-size:16px;color:#222;transform:scaleX(0.72);transform-origin:left top">F</div>
<div class="t" style="left:741px;top:213px;font-size:16px;color:#222;transform:scaleX(0.9);transform-origin:left top">G</div>

<!-- row headers -->
<div class="a" style="left:0;top:229px;width:26px;height:273px;background:#e6e6e6"></div>
<div class="a" style="left:0;top:261px;width:26px;height:40px;background:#d3d3d3"></div>
<div class="a" style="left:26px;top:229px;width:1px;height:273px;background:#9e9e9e"></div>
<div class="a" style="left:25px;top:261px;width:2px;height:40px;background:#217346"></div>

<!-- grid -->
<div class="a" style="left:27px;top:229px;width:771px;height:272px;background:#fdfdfd"></div>
<div class="a" style="left:0;top:260px;width:798px;height:1px;background:#dadada"></div>
<div class="a" style="left:0;top:300px;width:798px;height:1px;background:#dadada"></div>
<div class="a" style="left:0;top:340px;width:798px;height:1px;background:#dadada"></div>
<div class="a" style="left:0;top:380px;width:798px;height:1px;background:#dadada"></div>
<div class="a" style="left:0;top:420px;width:798px;height:1px;background:#dadada"></div>
<div class="a" style="left:0;top:460px;width:798px;height:1px;background:#dadada"></div>
<div class="a" style="left:0;top:500px;width:798px;height:1px;background:#dadada"></div>
<div class="a" style="left:131px;top:229px;width:1px;height:272px;background:#dadada"></div>
<div class="a" style="left:236px;top:229px;width:1px;height:272px;background:#dadada"></div>
<div class="a" style="left:348px;top:229px;width:1px;height:272px;background:#dadada"></div>
<div class="a" style="left:463px;top:229px;width:1px;height:272px;background:#dadada"></div>
<div class="a" style="left:582px;top:229px;width:1px;height:272px;background:#dadada"></div>
<div class="a" style="left:695px;top:229px;width:1px;height:272px;background:#dadada"></div>
<div class="a" style="left:798px;top:228px;width:1px;height:274px;background:#9e9e9e"></div>
<div class="a" style="left:0;top:260px;width:26px;height:1px;background:#b4b4b4"></div>
<div class="a" style="left:0;top:300px;width:26px;height:1px;background:#b4b4b4"></div>
<div class="a" style="left:0;top:340px;width:26px;height:1px;background:#b4b4b4"></div>
<div class="a" style="left:0;top:380px;width:26px;height:1px;background:#b4b4b4"></div>
<div class="a" style="left:0;top:420px;width:26px;height:1px;background:#b4b4b4"></div>
<div class="a" style="left:0;top:460px;width:26px;height:1px;background:#b4b4b4"></div>

<div class="a" style="left:0;top:0;width:0;height:0"></div>
<div class="t" style="left:8px;top:246px;font-size:16px;color:#222;transform:scaleX(0.9);transform-origin:left top">1</div>
<div class="t" style="left:8px;top:286px;font-size:16px;color:#217346;transform:scaleX(0.9);transform-origin:left top">2</div>
<div class="t" style="left:8px;top:326px;font-size:16px;color:#222;transform:scaleX(0.9);transform-origin:left top">3</div>
<div class="t" style="left:8px;top:366px;font-size:16px;color:#222;transform:scaleX(0.9);transform-origin:left top">4</div>
<div class="t" style="left:8px;top:406px;font-size:16px;color:#222;transform:scaleX(0.9);transform-origin:left top">5</div>
<div class="t" style="left:8px;top:446px;font-size:16px;color:#222;transform:scaleX(0.9);transform-origin:left top">6</div>
<div class="t" style="left:8px;top:486px;font-size:16px;color:#222;transform:scaleX(0.9);transform-origin:left top">7</div>

<!-- selection -->
<div class="a" style="left:130px;top:259px;width:108px;height:43px;border:2px solid #217346"></div>
<div class="a" style="left:232px;top:296px;width:8px;height:7px;background:#fdfdfd"></div>
<div class="a" style="left:234px;top:298px;width:5px;height:5px;background:#217346"></div>
<div class="a" style="left:134px;top:271px;width:1px;height:19px;background:#111"></div>
<svg style="left:180px;top:279px" width="9" height="17" viewBox="0 0 9 17"><path d="M1 0.5H8M1 16.5H8M4.5 0.5V16.5" fill="none" stroke="#111" stroke-width="1"/></svg>

<!-- vertical scrollbar -->
<div class="a" style="left:799px;top:210px;width:21px;height:292px;background:#e6e6e6"></div>
<div class="a" style="left:802px;top:212px;width:15px;height:15px;border:1px solid #ababab;background:#fdfdfd"></div>
<svg style="left:806px;top:217px" width="7" height="4" viewBox="0 0 7 4"><path d="M0 4L3.5 0L7 4Z" fill="#666"/></svg>
<div class="a" style="left:802px;top:227px;width:15px;height:262px;background:#d4d4d4"></div>
<div class="a" style="left:802px;top:227px;width:15px;height:169px;border:1px solid #ababab;background:#fdfdfd"></div>
<div class="a" style="left:802px;top:488px;width:15px;height:15px;border:1px solid #ababab;background:#fdfdfd"></div>
<svg style="left:806px;top:494px" width="7" height="4" viewBox="0 0 7 4"><path d="M0 0L3.5 4L7 0Z" fill="#666"/></svg>

<!-- sheet tabs bar -->
<div class="a" style="left:0;top:502px;width:820px;height:28px;background:#e6e6e6"></div>
<div class="a" style="left:0;top:502px;width:98px;height:1px;background:#ababab"></div>
<div class="a" style="left:167px;top:502px;width:632px;height:1px;background:#a0a0a0"></div>
<svg style="left:24px;top:512px" width="5" height="7" viewBox="0 0 5 7"><path d="M5 0V7L0 3.5Z" fill="#217346"/></svg>
<svg style="left:54px;top:512px" width="5" height="7" viewBox="0 0 5 7"><path d="M0 0V7L5 3.5Z" fill="#217346"/></svg>
<div class="a" style="left:79px;top:517px;width:2px;height:2px;background:#217346"></div>
<div class="a" style="left:83px;top:517px;width:2px;height:2px;background:#217346"></div>
<div class="a" style="left:87px;top:517px;width:2px;height:2px;background:#217346"></div>
<div class="a" style="left:98px;top:501px;width:70px;height:26px;background:#fdfdfd;border-left:1px solid #ababab;border-right:1px solid #ababab"></div>
<div class="a" style="left:98px;top:525px;width:70px;height:2px;background:#217346"></div>
<div class="t" style="left:111px;top:508px;font-size:14px;color:#217346;letter-spacing:-0.3px">Sheet3</div>
<div class="t" style="left:180px;top:508px;font-size:14px;color:#333;letter-spacing:-0.3px">Sheet4</div>
<div class="a" style="left:236px;top:507px;width:1px;height:18px;background:#a0a0a0"></div>
<div class="t" style="left:249px;top:508px;font-size:14px;color:#333;letter-spacing:-0.3px">Sheet5</div>
<div class="a" style="left:305px;top:507px;width:1px;height:18px;background:#a0a0a0"></div>
<div class="t" style="left:318px;top:508px;font-size:14px;color:#333;letter-spacing:-0.3px">Sheet6</div>
<div class="a" style="left:374px;top:507px;width:1px;height:18px;background:#a0a0a0"></div>
<div class="t" style="left:387px;top:508px;font-size:14px;color:#333;letter-spacing:-0.3px">Sheet</div>
<div class="a" style="left:431px;top:517px;width:2px;height:2px;background:#217346"></div>
<div class="a" style="left:435px;top:517px;width:2px;height:2px;background:#217346"></div>
<div class="a" style="left:439px;top:517px;width:2px;height:2px;background:#217346"></div>
<svg style="left:455px;top:508px" width="16" height="16" viewBox="0 0 16 16"><circle cx="8" cy="8" r="7.3" fill="none" stroke="#c2c2c2" stroke-width="1.1"/><path d="M8 4V12M4 8H12" stroke="#c2c2c2" stroke-width="1.3"/></svg>
<div class="a" style="left:491px;top:511px;width:2px;height:2px;background:#b0b0b0"></div>
<div class="a" style="left:491px;top:515px;width:2px;height:2px;background:#b0b0b0"></div>
<div class="a" style="left:491px;top:519px;width:2px;height:2px;background:#b0b0b0"></div>

<!-- horizontal scrollbar -->
<div class="a" style="left:508px;top:509px;width:276px;height:15px;background:#d4d4d4"></div>
<div class="a" style="left:508px;top:509px;width:15px;height:15px;border:1px solid #ababab;background:#fdfdfd"></div>
<svg style="left:513px;top:513px" width="4" height="7" viewBox="0 0 4 7"><path d="M4 0V7L0 3.5Z" fill="#666"/></svg>
<div class="a" style="left:522px;top:509px;width:131px;height:15px;border:1px solid #ababab;background:#fdfdfd"></div>
<div class="a" style="left:786px;top:509px;width:15px;height:15px;border:1px solid #ababab;background:#fdfdfd"></div>
<svg style="left:791px;top:513px" width="4" height="7" viewBox="0 0 4 7"><path d="M0 0V7L4 3.5Z" fill="#666"/></svg>

<!-- status bar -->
<div class="a" style="left:0;top:530px;width:820px;height:20px;background:#fafafa;border-top:1px solid #c4c4c4"></div>
<div class="t" style="left:6px;top:535px">编辑</div>
<div class="t" style="left:48px;top:535px">滚动</div>
<div class="a" style="left:518px;top:531px;width:38px;height:19px;background:#c8c8c8"></div>
<svg style="left:530px;top:534px" width="13" height="13" viewBox="0 0 13 13"><path d="M0.5 0.5H12.5V12.5H0.5ZM0.5 4.5H12.5M0.5 8.5H12.5M4.5 0.5V12.5M8.5 0.5V12.5" fill="none" stroke="#666" stroke-width="1"/></svg>
<svg style="left:568px;top:534px" width="14" height="13" viewBox="0 0 14 13"><rect x="0.5" y="0.5" width="13" height="12" fill="none" stroke="#666" stroke-width="1.1"/><rect x="4.5" y="2.5" width="5" height="8" fill="none" stroke="#666" stroke-width="1"/><path d="M5.5 4.5H8.5M5.5 6.5H8.5M5.5 8.5H8.5" stroke="#666" stroke-width="1"/></svg>
<svg style="left:606px;top:534px" width="14" height="13" viewBox="0 0 14 13"><rect x="0.5" y="0.5" width="13" height="12" fill="none" stroke="#666" stroke-width="1.1"/><path d="M0.5 7.5H9.5V0.5M4.5 0.5V7.5" fill="none" stroke="#666" stroke-width="1"/></svg>
<div class="a" style="left:637px;top:540px;width:6px;height:2px;background:#555"></div>
<div class="a" style="left:647px;top:541px;width:99px;height:1px;background:#a8a8a8"></div>
<div class="a" style="left:695px;top:536px;width:5px;height:10px;background:#666"></div>
<svg style="left:750px;top:537px" width="8" height="8" viewBox="0 0 8 8"><path d="M4 0V8M0 4H8" stroke="#555" stroke-width="1.6"/></svg>
<div class="t" style="left:769px;top:534px;font-size:13px;color:#333;letter-spacing:-0.3px">100%</div>

<!-- right green border -->
<div class="a" style="left:820px;top:0;width:1px;height:550px;background:#217346"></div>

</body></html>
